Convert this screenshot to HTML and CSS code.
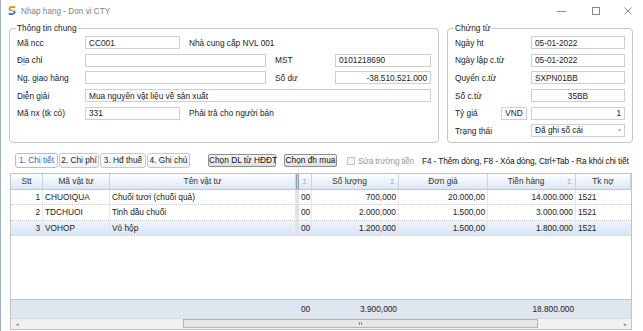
FILE: index.html
```html
<!DOCTYPE html>
<html lang="vi">
<head>
  <meta charset="UTF-8">
  <meta name="viewport" content="width=device-width, initial-scale=1.0">
  <title>Nhap hang - Don vi CTY</title>
  <link rel="stylesheet" href="styles.css">
</head>
<body>
  <div class="window">
    <div class="titlebar">
      <svg class="app-icon" width="8" height="9" viewBox="0 0 8 9">
        <path d="M7.2 1.6 Q4.5 0.2 2 1.6 Q0.4 3 2.6 4.3 L4.4 4.8" fill="none" stroke="#f08a1c" stroke-width="1.7"/>
        <path d="M0.8 7.6 Q3.6 8.9 6 7.4 Q7.6 6 5.4 4.7" fill="none" stroke="#2f6fc4" stroke-width="1.7"/>
      </svg>
      <span class="title">Nhap hang - Don vi CTY</span>
      <div class="controls">
        <span class="ctl"><svg width="10" height="10"><line x1="0" y1="5.5" x2="9" y2="5.5"/></svg></span>
        <span class="ctl"><svg width="10" height="10"><rect x="1.5" y="1.5" width="7" height="7"/></svg></span>
        <span class="ctl close"><svg width="10" height="10"><path d="M1.5 1.5 L8.5 8.5 M8.5 1.5 L1.5 8.5"/></svg></span>
      </div>
    </div>

    <div class="top">
      <fieldset class="box info">
        <legend>Thông tin chung</legend>
        <div class="form info-form">
          <label>Mã ncc</label>
          <input class="field" value="CC001">
          <span class="note span3">Nhà cung cấp NVL 001</span>

          <label>Địa chỉ</label>
          <input class="field span2" value="">
          <label class="sub">MST</label>
          <input class="field" value="0101218690">

          <label>Ng. giao hàng</label>
          <input class="field span2" value="">
          <label class="sub">Số dư</label>
          <input class="field right" value="-38.510.521.000">

          <label>Diễn giải</label>
          <input class="field span4" value="Mua nguyên vật liệu về sản xuất">

          <label>Mã nx (tk có)</label>
          <input class="field" value="331">
          <span class="note span3">Phải trả cho người bán</span>
        </div>
      </fieldset>

      <fieldset class="box doc">
        <legend>Chứng từ</legend>
        <div class="form doc-form">
          <label class="span2">Ngày ht</label>
          <input class="field" value="05-01-2022">

          <label class="span2">Ngày lập c.từ</label>
          <input class="field" value="05-01-2022">

          <label class="span2">Quyển c.từ</label>
          <input class="field" value="SXPN01BB">

          <label class="span2">Số c.từ</label>
          <input class="field center" value="35BB">

          <label>Tỷ giá</label>
          <input class="field currency" value="VND">
          <input class="field right" value="1">

          <label class="span2">Trạng thái</label>
          <div class="field select"><span>Đã ghi số cái</span><i>&#9662;</i></div>
        </div>
      </fieldset>
    </div>

    <div class="toolbar">
      <div class="tabs">
        <span class="tab tab-1 active">1. Chi tiết</span>
        <span class="tab tab-2">2. Chi phí</span>
        <span class="tab tab-3">3. Hđ thuế</span>
        <span class="tab tab-4">4. Ghi chú</span>
      </div>
      <button class="btn btn-hddt">Chọn DL từ HĐĐT</button>
      <button class="btn btn-dh">Chọn đh mua</button>
      <span class="check"></span>
      <span class="check-label">Sửa trường tiền</span>
      <span class="hint">F4 - Thêm dòng, F8 - Xóa dòng, Ctrl+Tab - Ra khỏi chi tiết</span>
    </div>

    <div class="grid">
      <div class="row grid-head">
        <div class="c">Stt</div>
        <div class="c">Mã vật tư</div>
        <div class="c">Tên vật tư</div>
        <div class="c split"></div>
        <div class="c sum"><i>&Sigma;</i></div>
        <div class="c sum"><span>Số lượng</span><i>&Sigma;</i></div>
        <div class="c">Đơn giá</div>
        <div class="c sum"><span>Tiền hàng</span><i>&Sigma;</i></div>
        <div class="c">Tk nợ</div>
      </div>

      <div class="grid-body">
        <div class="row">
          <div class="c num">1</div>
          <div class="c">CHUOIQUA</div>
          <div class="c">Chuối tươi (chuối quả)</div>
          <div class="c split"></div>
          <div class="c num">00</div>
          <div class="c num">700,000</div>
          <div class="c num">20.000,00</div>
          <div class="c num">14.000.000</div>
          <div class="c">1521</div>
        </div>
        <div class="row">
          <div class="c num">2</div>
          <div class="c">TDCHUOI</div>
          <div class="c">Tinh dầu chuối</div>
          <div class="c split"></div>
          <div class="c num">00</div>
          <div class="c num">2.000,000</div>
          <div class="c num">1.500,00</div>
          <div class="c num">3.000.000</div>
          <div class="c">1521</div>
        </div>
        <div class="row selected">
          <div class="c num">3</div>
          <div class="c">VOHOP</div>
          <div class="c">Vỏ hộp</div>
          <div class="c split"></div>
          <div class="c num">00</div>
          <div class="c num">1.200,000</div>
          <div class="c num">1.500,00</div>
          <div class="c num">1.800.000</div>
          <div class="c">1521</div>
        </div>
      </div>

      <div class="row grid-foot">
        <div class="c"></div>
        <div class="c"></div>
        <div class="c"></div>
        <div class="c split"></div>
        <div class="c num">00</div>
        <div class="c num">3.900,000</div>
        <div class="c"></div>
        <div class="c num">18.800.000</div>
        <div class="c"></div>
      </div>

      <div class="hscroll">
        <span class="arrow">&#9666;</span>
        <div class="track"><div class="thumb"><span class="grip"></span></div></div>
        <span class="arrow">&#9656;</span>
      </div>
    </div>
  </div>
</body>
</html>
```

FILE: styles.css
```css
  * {
    box-sizing: border-box;
  }
  body {
    margin: 0;
    background-color: #fff;
    font-family: "Liberation Sans", Arial, sans-serif;
    font-size: 8.3px;
    color: #222;
  }
  .window {
    width: 643px;
    height: 331px;
    background-color: #fff;
    border-left: 1px solid #9fb0c4;
    overflow: hidden;
  }

  /* title bar */
  .titlebar {
    height: 22px;
    display: flex;
    align-items: center;
    padding-left: 7px;
  }
  .app-icon {
    display: block;
    margin-top: -1px;
  }
  .title {
    margin-left: 5px;
    color: #808080;
    font-size: 8.2px;
  }
  .controls {
    margin-left: auto;
    display: flex;
    height: 22px;
  }
  .ctl {
    width: 34px;
    display: flex;
    align-items: center;
    justify-content: center;
  }
  .ctl.close {
    width: 30px;
  }
  .ctl svg {
    stroke: #8a8a8a;
    stroke-width: 1;
    fill: none;
  }

  /* header boxes */
  .top {
    display: flex;
    gap: 8px;
    padding: 1px 8px 0;
  }
  .box {
    margin: 0;
    padding: 1px 7px 2px;
    border: 1px solid #c6c6c6;
    border-radius: 4px;
    min-width: 0;
  }
  .box legend {
    padding: 0 1px;
    margin-left: -1px;
    line-height: 10px;
    color: #222;
  }
  .info {
    flex: 0 0 430px;
  }
  .doc {
    flex: 0 0 186px;
  }
  .form {
    display: grid;
    grid-auto-rows: 17.6px;
    align-items: center;
  }
  .info-form {
    grid-template-columns: 68px 95px 86px 69px 96px;
  }
  .doc-form {
    grid-template-columns: 46px 30px 94px;
  }
  .form label {
    color: #222;
    white-space: nowrap;
  }
  .form .sub {
    padding-left: 9px;
  }
  .note {
    padding-left: 9px;
    white-space: nowrap;
  }
  .span2 { grid-column: span 2; }
  .span3 { grid-column: span 3; }
  .span4 { grid-column: span 4; }

  .field {
    display: block;
    width: 100%;
    height: 13px;
    margin: 0;
    padding: 0 3px;
    border: 1px solid #cfcfcf;
    border-radius: 0;
    background-color: #fff;
    font: inherit;
    color: #222;
    outline: none;
  }
  .field.right { text-align: right; }
  .field.center { text-align: center; }
  .field.currency {
    width: 26px;
    padding: 0 2px;
    text-align: center;
  }
  .select {
    display: flex;
    align-items: center;
    justify-content: space-between;
    line-height: 11px;
  }
  .select i {
    font-style: normal;
    font-size: 6px;
    color: #b0b0b0;
  }

  /* tabs and buttons */
  .toolbar {
    display: flex;
    align-items: center;
    height: 16px;
    margin-top: 10px;
    padding-left: 14px;
    white-space: nowrap;
  }
  .tabs {
    display: flex;
    gap: 1px;
  }
  .tab {
    height: 15px;
    line-height: 13px;
    border: 1px solid #c8c8c8;
    border-radius: 3px;
    background: linear-gradient(#ffffff, #f1f1f1);
    color: #222;
    text-align: center;
  }
  .tab-1 { width: 43px; }
  .tab-2 { width: 40px; }
  .tab-3 { width: 46px; }
  .tab-4 { width: 43px; }
  .tab.active {
    color: #2f67b8;
    border-color: #a9bfdc;
    background: #fff;
  }
  .btn {
    height: 13px;
    margin: 0 0 0 8px;
    padding: 0;
    border: 1px solid #8e8e8e;
    border-radius: 2px;
    background: linear-gradient(#f6f6f6, #e0e0e0);
    font: inherit;
    color: #111;
    line-height: 11px;
    text-align: center;
  }
  .btn-hddt {
    width: 68px;
    margin-left: 18px;
  }
  .btn-dh {
    width: 53px;
  }
  .check {
    width: 8px;
    height: 8px;
    margin-left: 10px;
    border: 1px solid #c4c4c4;
    background-color: #f4f4f4;
  }
  .check-label {
    margin-left: 3px;
    color: #9a9a9a;
    letter-spacing: -0.2px;
  }
  .hint {
    margin-left: 8px;
    color: #111;
    letter-spacing: -0.12px;
  }

  /* grid */
  .grid {
    width: 622px;
    height: 157px;
    margin: 4px 0 0 9px;
    border: 1px solid #c3c3c3;
    display: flex;
    flex-direction: column;
  }
  .row {
    display: grid;
    grid-template-columns: 32px 67px 186px 3px 13px 87px 89px 88px 55px;
    height: 15.6px;
    border-bottom: 1px dotted #cfcfcf;
  }
  .c {
    padding: 0 2px;
    line-height: 14.6px;
    white-space: nowrap;
    overflow: hidden;
    border-right: 1px solid #e6e6e6;
  }
  .c:last-child {
    border-right: none;
  }
  .c.num {
    text-align: right;
  }
  .split {
    padding: 0;
    background-color: #e2e2e2;
    border-right: none;
  }
  .grid-head {
    height: 16px;
    border-bottom: 1px solid #b9c8da;
    background: linear-gradient(#fdfeff, #dbe6f4);
  }
  .grid-head .c {
    text-align: center;
    color: #333;
    line-height: 15px;
    border-right: 1px solid #c6d3e3;
  }
  .grid-head .split {
    background-color: #c6d0dc;
    border-left: 1px solid #8f9fb3;
    border-right: 1px solid #8f9fb3;
  }
  .grid-head .sum {
    display: flex;
    padding: 0;
  }
  .grid-head .sum span {
    flex: 1;
  }
  .grid-head .sum i {
    width: 11px;
    font-style: normal;
    font-size: 6.5px;
    color: #a0a8b4;
    text-align: center;
  }
  .grid-head .sum i:only-child {
    flex: 1;
  }
  .selected {
    background: linear-gradient(#edf3fb, #d9e5f4);
  }
  .grid-body {
    flex: 1;
  }
  .grid-foot {
    height: 19px;
    border-top: 1px solid #bcc8d6;
    border-bottom: none;
    background-color: #dfe6ef;
  }
  .grid-foot .c {
    line-height: 18px;
    border-right: none;
  }
  .grid-foot .split {
    background-color: transparent;
  }

  /* horizontal scroll bar */
  .hscroll {
    height: 11px;
    display: flex;
    align-items: center;
    background-color: #f0f0f0;
    border-top: 1px solid #dcdcdc;
  }
  .arrow {
    width: 12px;
    text-align: center;
    font-size: 5px;
    color: #777;
  }
  .track {
    flex: 1;
    height: 9px;
  }
  .thumb {
    width: 355px;
    height: 9px;
    margin-left: 160px;
    border: 1px solid #b5b5b5;
    background-color: #e6e6e6;
    display: flex;
    align-items: center;
    justify-content: center;
  }
  .grip {
    width: 3px;
    height: 3px;
    border-left: 1px solid #888;
    border-right: 1px solid #888;
  }
```
